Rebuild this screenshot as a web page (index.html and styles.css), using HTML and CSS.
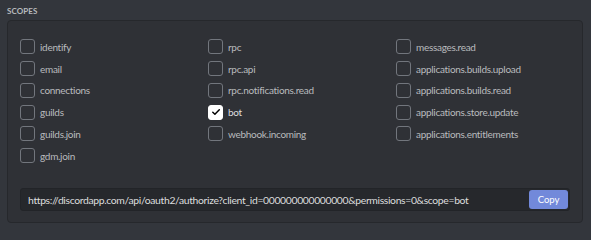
FILE: index.html
```html
<!DOCTYPE html>
<html>
<head>
<meta charset="utf-8">
<link rel="stylesheet" href="styles.css">
</head>
<body>
<div class="page">
  <div class="title">Scopes</div>
  <div class="panel">
    <div class="grid">
      <div class="col">
        <label class="item"><span class="box"></span><span class="lbl">identify</span></label>
        <label class="item"><span class="box"></span><span class="lbl">email</span></label>
        <label class="item"><span class="box"></span><span class="lbl">connections</span></label>
        <label class="item"><span class="box"></span><span class="lbl">guilds</span></label>
        <label class="item"><span class="box"></span><span class="lbl">guilds.join</span></label>
        <label class="item"><span class="box"></span><span class="lbl">gdm.join</span></label>
      </div>
      <div class="col">
        <label class="item"><span class="box"></span><span class="lbl">rpc</span></label>
        <label class="item"><span class="box"></span><span class="lbl">rpc.api</span></label>
        <label class="item"><span class="box"></span><span class="lbl">rpc.notifications.read</span></label>
        <label class="item checked"><span class="box"><svg width="10" height="8" viewBox="0 0 10 8"><path d="M1.8 4.3 L3.9 6.2 L8.3 1.8" fill="none" stroke="#000" stroke-width="1.5" stroke-linecap="round" stroke-linejoin="round"/></svg></span><span class="lbl">bot</span></label>
        <label class="item"><span class="box"></span><span class="lbl">webhook.incoming</span></label>
      </div>
      <div class="col">
        <label class="item"><span class="box"></span><span class="lbl">messages.read</span></label>
        <label class="item"><span class="box"></span><span class="lbl">applications.builds.upload</span></label>
        <label class="item"><span class="box"></span><span class="lbl">applications.builds.read</span></label>
        <label class="item"><span class="box"></span><span class="lbl">applications.store.update</span></label>
        <label class="item"><span class="box"></span><span class="lbl">applications.entitlements</span></label>
      </div>
    </div>
    <div class="urlbox">
      <span class="url">https://discordapp.com/api/oauth2/authorize?client_id=000000000000000&amp;permissions=0&amp;scope=bot</span>
      <button class="copy">Copy</button>
    </div>
  </div>
</div>
</body>
</html>
```

FILE: styles.css
```css
html, body {
  margin: 0;
  padding: 0;
  background: #33363c;
}
body {
  font-family: Lato, "Noto Sans", sans-serif;
  width: 591px;
  height: 230px;
  overflow: hidden;
}
.page {
  padding: 7px 8px 0 7px;
}
.title {
  font-size: 8px;
  font-weight: 700;
  text-transform: uppercase;
  color: #b9bbbe;
  letter-spacing: 0.1px;
  height: 13px;
  line-height: 8px;
}
.panel {
  box-sizing: border-box;
  width: 576px;
  height: 203px;
  background: #2f3136;
  border: 1px solid #26282c;
  border-radius: 4px;
  padding: 15px 12px 12px 12px;
}
.grid {
  display: grid;
  grid-template-columns: 188px 188px 1fr;
  height: 131px;
}
.col {
  display: flex;
  flex-direction: column;
}
.item {
  display: flex;
  align-items: center;
  height: 21.75px;
}
.box {
  box-sizing: border-box;
  width: 15px;
  height: 15px;
  border: 1px solid #72767d;
  border-radius: 3px;
  margin-right: 5px;
  display: flex;
  align-items: center;
  justify-content: center;
  flex: none;
}
.checked .box {
  background: #ffffff;
  border-color: #ffffff;
}
.lbl {
  font-size: 10px;
  color: #b9bbbe;
  letter-spacing: -0.3px;
}
.checked .lbl {
  color: #dcddde;
}
.urlbox {
  margin-top: 21px;
  box-sizing: border-box;
  height: 23px;
  background: #26282c;
  border: 1px solid #222428;
  border-radius: 3px;
  display: flex;
  align-items: center;
  justify-content: space-between;
  padding: 0 1px 0 7px;
}
.url {
  font-size: 10.4px;
  letter-spacing: -0.35px;
  color: #dcddde;
  white-space: nowrap;
}
.copy {
  width: 39px;
  height: 19px;
  background: #7289da;
  border: none;
  border-radius: 3px;
  color: #ffffff;
  font-family: Lato, "Noto Sans", sans-serif;
  font-size: 9.5px;
  padding: 0;
}
```
